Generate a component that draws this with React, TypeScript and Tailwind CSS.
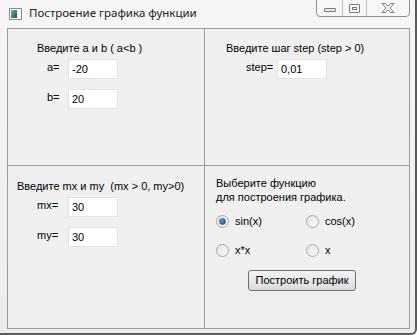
import React from 'react';

const font = { fontFamily: '"Liberation Sans", Arial, sans-serif' };

function Field({ label, value, pl, lw }: { label: string; value: string; pl: string; lw: string }) {
  return (
    <div className={`flex items-center ${pl}`}>
      <span className={`${lw} -mt-[4px] text-[11px] leading-[13px] text-black`}>{label}</span>
      <div className="w-[50px] h-[20px] bg-white border border-[#e2e2e2] flex items-center pl-[3px] text-[11px] text-black">
        {value}
      </div>
    </div>
  );
}

function Radio({ label, checked }: { label: string; checked?: boolean }) {
  return (
    <div className="flex items-center gap-[6px] w-[90px]">
      <span className="w-[13px] h-[13px] rounded-full border border-[#a8a8a8] bg-gradient-to-br from-[#e4e4e4] to-[#fbfbfb] flex items-center justify-center">
        {checked && <span className="w-[7px] h-[7px] rounded-full bg-gradient-to-br from-[#6ea9d8] to-[#1a5590] border border-[#2c5f8f]" />}
      </span>
      <span className="text-[11px] leading-[13px] text-black">{label}</span>
    </div>
  );
}

export default function App() {
  return (
    <div
      className="w-[417px] h-[335px] bg-gradient-to-b from-[#f6f6f6] to-[#ececec] border-r-[2px] border-b-[2px] border-[#5a5a5a] rounded-br-[6px] flex flex-col overflow-hidden"
      style={font}
    >
      <div className="h-[28px] flex items-start">
        <div className="mt-[8px] ml-[9px] w-[13px] h-[12px] border border-[#8a8a8a] bg-white flex">
          <span className="w-[6px] h-[8px] mt-[1px] ml-[1px] bg-gradient-to-br from-[#6fb3b0] to-[#1d4f5a]" />
        </div>
        <span
          className="ml-[7px] mt-[5px] text-[11.5px] leading-[15px] text-[#222]"
          style={{ fontFamily: '"Noto Sans", "Open Sans", sans-serif' }}
        >
          Построение графика функции
        </span>
        <div className="ml-auto mr-[5px] -mt-[1px] w-[94px] h-[18px] border border-[#8e8e8e] rounded-b-[4px] bg-[#f7f7f7] flex">
          <div className="w-[26px] border-r border-[#c2c2c2] flex items-center justify-center">
            <span className="w-[12px] h-[4px] mt-[3px] border border-[#7a7a7a] rounded-[1px] bg-[#e8e8e8]" />
          </div>
          <div className="w-[24px] border-r border-[#c2c2c2] flex items-center justify-center">
            <span className="w-[11px] h-[9px] border border-[#7a7a7a] rounded-[1px] flex items-center justify-center">
              <span className="w-[5px] h-[3px] border border-[#7a7a7a]" />
            </span>
          </div>
          <div className="flex-1 flex items-center justify-center">
            <svg width="16" height="12" viewBox="0 0 16 12">
              <path
                d="M2 1.5 L5.5 1.5 L8 4.2 L10.5 1.5 L14 1.5 L10 6 L14 10.5 L10.5 10.5 L8 7.8 L5.5 10.5 L2 10.5 L6 6 Z"
                fill="#f2f2f2"
                stroke="#7c7c7c"
                strokeWidth="1"
              />
            </svg>
          </div>
        </div>
      </div>

      <div className="ml-[7px] w-[403px] h-[301px] border border-[#9c9c9c] bg-[#f0f0f0] grid grid-cols-[197px_1fr] grid-rows-[137px_1fr]">
        <div className="border-r border-b border-[#9c9c9c] pt-[13px]">
          <div className="pl-[29px] text-[11px] leading-[13px] text-black">Введите a и b ( a&lt;b )</div>
          <div className="mt-[4px] flex flex-col gap-[10px]">
            <Field label="a=" value="-20" pl="pl-[39px]" lw="w-[21px]" />
            <Field label="b=" value="20" pl="pl-[39px]" lw="w-[21px]" />
          </div>
        </div>
        <div className="border-b border-[#9c9c9c] pt-[13px]">
          <div className="pl-[21px] text-[11px] leading-[13px] text-black">Введите шаг step (step &gt; 0)</div>
          <div className="mt-[4px]">
            <Field label="step=" value="0,01" pl="pl-[41px]" lw="w-[31px]" />
          </div>
        </div>
        <div className="border-r border-[#9c9c9c] pt-[14px]">
          <div className="pl-[9px] text-[11px] leading-[13px] text-black whitespace-pre">Введите mx и my  (mx &gt; 0, my&gt;0)</div>
          <div className="mt-[4px] flex flex-col gap-[10px]">
            <Field label="mx=" value="30" pl="pl-[29px]" lw="w-[31px]" />
            <Field label="my=" value="30" pl="pl-[29px]" lw="w-[31px]" />
          </div>
        </div>
        <div className="pt-[10px] pl-[11px]">
          <div className="text-[11px] leading-[14px] text-black">
            Выберите функцию
            <br />
            для построения графика.
          </div>
          <div className="mt-[11px] grid grid-cols-[90px_90px] gap-y-[16px]">
            <Radio label="sin(x)" checked />
            <Radio label="cos(x)" />
            <Radio label="x*x" />
            <Radio label="x" />
          </div>
          <div className="mt-[13px] ml-[32px] w-[108px] h-[21px] border border-[#707070] rounded-[3px] bg-gradient-to-b from-[#f4f4f4] to-[#dcdcdc] flex items-center justify-center text-[11px] text-black">
            Построить график
          </div>
        </div>
      </div>
    </div>
  );
}
